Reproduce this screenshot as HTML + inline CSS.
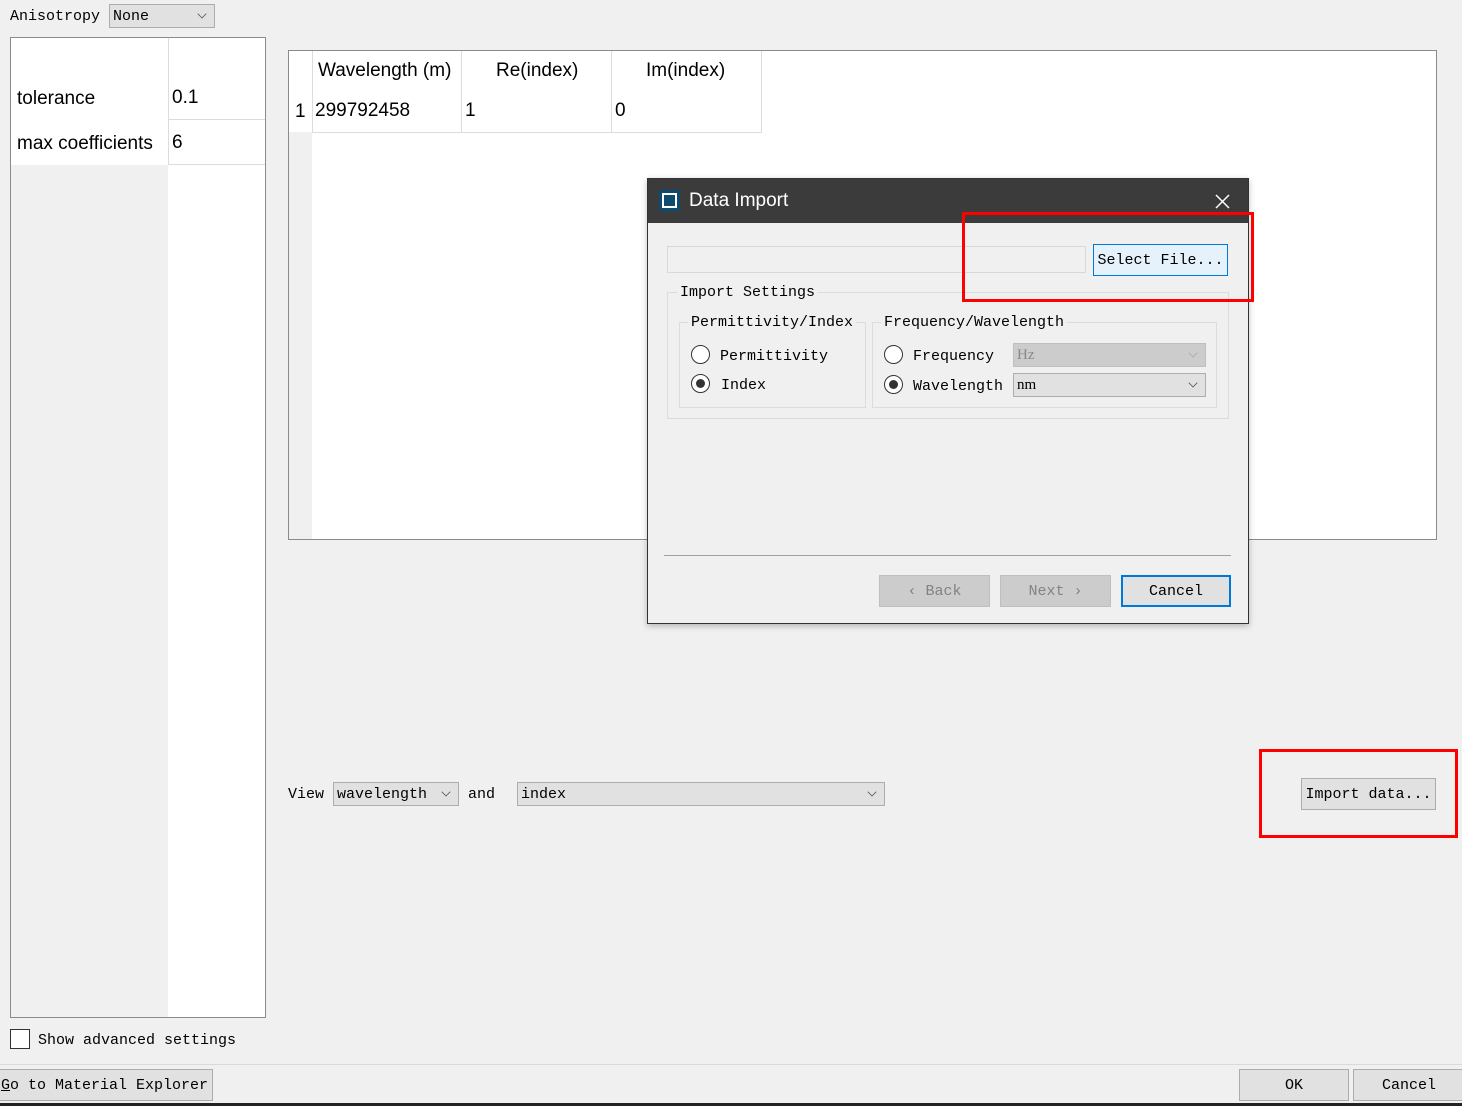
<!DOCTYPE html>
<html><head><meta charset="utf-8">
<style>
*{box-sizing:border-box;margin:0;padding:0}
body{width:1462px;height:1106px;background:#f0f0f0;position:relative;overflow:hidden;font-family:"Liberation Mono","Noto Serif CJK SC",monospace;font-size:15px;color:#000;line-height:21px}
.a{position:absolute}
.sans{font-family:"Liberation Sans","Noto Sans CJK SC",sans-serif;font-size:19px;line-height:26px}
.combo{position:absolute;background:#e1e1e1;border:1px solid #adadad;padding-left:3px;line-height:20px}
.chev{position:absolute;right:8px;width:8px;height:8px;border-right:1px solid #555;border-bottom:1px solid #555;transform:rotate(45deg) scale(.8);top:5px}
.btn{position:absolute;background:#e1e1e1;border:1px solid #adadad;text-align:center}
.radio{position:absolute;width:19px;height:19px;border:1px solid #333;border-radius:50%;background:#fff}
.radio.on::after{content:"";position:absolute;left:4px;top:4px;width:9px;height:9px;border-radius:50%;background:#333}
.grp{position:absolute;border:1px solid #dcdcdc}
.lbl{position:absolute;background:#f0f0f0;padding:0 3px;line-height:20px}
</style></head><body>
<div class="a" style="left:10px;top:6px">Anisotropy</div>
<div class="combo" style="left:109px;top:4px;width:106px;height:24px;line-height:24px">None<span class="chev"></span></div>

<div class="a" style="left:10px;top:37px;width:256px;height:981px;border:1px solid #8a8a95;background:#fff">
  <div class="a" style="left:0;top:127px;width:157px;height:852px;background:#f0f0f0"></div>
  <div class="a" style="left:157px;top:0;width:1px;height:127px;background:#dcdcdc"></div>
  <div class="a" style="left:157px;top:81px;width:97px;height:1px;background:#dcdcdc"></div>
  <div class="a" style="left:157px;top:126px;width:97px;height:1px;background:#dcdcdc"></div>
  <div class="a sans" style="left:6px;top:48px">tolerance</div>
  <div class="a sans" style="left:161px;top:47px">0.1</div>
  <div class="a sans" style="left:6px;top:93px">max coefficients</div>
  <div class="a sans" style="left:161px;top:92px">6</div>
</div>

<div class="a" style="left:288px;top:50px;width:1149px;height:490px;border:1px solid #8a8a8a;background:#fff">
  <div class="a" style="left:0;top:81px;width:23px;height:407px;background:#f0f0f0"></div>
  <div class="a" style="left:23px;top:81px;width:450px;height:1px;background:#dcdcdc"></div>
  <div class="a" style="left:23px;top:0;width:1px;height:81px;background:#dcdcdc"></div>
  <div class="a" style="left:172px;top:0;width:1px;height:81px;background:#dcdcdc"></div>
  <div class="a" style="left:322px;top:0;width:1px;height:81px;background:#dcdcdc"></div>
  <div class="a" style="left:472px;top:0;width:1px;height:81px;background:#dcdcdc"></div>
  <div class="a sans" style="left:29px;top:7px">Wavelength (m)</div>
  <div class="a sans" style="left:207px;top:7px">Re(index)</div>
  <div class="a sans" style="left:357px;top:7px">Im(index)</div>
  <div class="a sans" style="left:6px;top:48px">1</div>
  <div class="a sans" style="left:26px;top:47px">299792458</div>
  <div class="a sans" style="left:176px;top:47px">1</div>
  <div class="a sans" style="left:326px;top:47px">0</div>
</div>

<div class="a" style="left:288px;top:784px">View</div>
<div class="combo" style="left:333px;top:782px;width:126px;height:24px;line-height:24px">wavelength<span class="chev"></span></div>
<div class="a" style="left:468px;top:784px">and</div>
<div class="combo" style="left:517px;top:782px;width:368px;height:24px;line-height:24px">index<span class="chev"></span></div>

<div class="btn" style="left:1301px;top:778px;width:135px;height:32px;line-height:32px">Import data...</div>
<div class="a" style="left:1259px;top:749px;width:199px;height:89px;border:3px solid #f00"></div>

<div class="a" style="left:10px;top:1029px;width:20px;height:20px;border:1px solid #333;background:#fff"></div>
<div class="a" style="left:38px;top:1030px">Show advanced settings</div>
<div class="a" style="left:0;top:1064px;width:1462px;height:1px;background:#dadada"></div>
<div class="btn" style="left:-1px;top:1069px;width:214px;height:32px;line-height:32px;text-align:left;padding-left:1px"><u>G</u>o to Material Explorer</div>
<div class="btn" style="left:1239px;top:1069px;width:110px;height:32px;line-height:32px">OK</div>
<div class="btn" style="left:1353px;top:1069px;width:112px;height:32px;line-height:32px">Cancel</div>
<div class="a" style="left:0;top:1103px;width:1462px;height:3px;background:#222"></div>

<div class="a" style="left:647px;top:178px;width:602px;height:446px;background:#f0f0f0;border:1px solid #333;box-shadow:0 2px 6px rgba(0,0,0,.25)">
  <div class="a" style="left:0;top:0;width:600px;height:44px;background:#3b3b3b"></div>
  <div class="a" style="left:11px;top:11px;width:21px;height:21px;background:#0e4a6e"></div>
  <div class="a" style="left:14px;top:14px;width:15px;height:15px;border:2px solid #fff"></div>
  <div class="a" style="left:41px;top:9px;color:#fff;font-family:'Liberation Sans',sans-serif;font-size:19px;line-height:26px">Data Import</div>
  <svg class="a" style="left:567px;top:15px" width="15" height="15"><path d="M1 1L14 14M14 1L1 14" stroke="#fff" stroke-width="1.5"/></svg>

  <div class="a" style="left:19px;top:67px;width:419px;height:27px;border:1px solid #d8d8d8;background:#f0f0f0"></div>
  <div class="btn" style="left:445px;top:65px;width:135px;height:32px;line-height:32px;background:#e5f1fb;border-color:#0078d7">Select File...</div>

  <div class="grp" style="left:19px;top:113px;width:562px;height:127px"></div>
  <div class="lbl" style="left:29px;top:104px">Import Settings</div>
  <div class="grp" style="left:31px;top:143px;width:187px;height:86px"></div>
  <div class="lbl" style="left:40px;top:134px">Permittivity/Index</div>
  <div class="grp" style="left:224px;top:143px;width:345px;height:86px"></div>
  <div class="lbl" style="left:233px;top:134px">Frequency/Wavelength</div>

  <div class="radio" style="left:43px;top:166px"></div>
  <div class="a" style="left:72px;top:167px">Permittivity</div>
  <div class="radio on" style="left:43px;top:195px"></div>
  <div class="a" style="left:73px;top:196px">Index</div>

  <div class="radio" style="left:236px;top:166px"></div>
  <div class="a" style="left:265px;top:167px">Frequency</div>
  <div class="radio on" style="left:236px;top:196px"></div>
  <div class="a" style="left:265px;top:197px">Wavelength</div>
  <div class="combo" style="left:365px;top:164px;width:193px;height:24px;line-height:22px;background:#cccccc;border-color:#bfbfbf;color:#888;font-family:'Liberation Serif',serif">Hz<span class="chev" style="border-color:#aaa"></span></div>
  <div class="combo" style="left:365px;top:194px;width:193px;height:24px;line-height:22px;font-family:'Liberation Serif',serif">nm<span class="chev"></span></div>

  <div class="a" style="left:16px;top:376px;width:567px;height:1px;background:#a0a0a0"></div>
  <div class="btn" style="left:231px;top:396px;width:111px;height:32px;line-height:32px;background:#cccccc;border-color:#bfbfbf;color:#838383">&lsaquo; Back</div>
  <div class="btn" style="left:352px;top:396px;width:111px;height:32px;line-height:32px;background:#cccccc;border-color:#bfbfbf;color:#838383">Next &rsaquo;</div>
  <div class="btn" style="left:473px;top:396px;width:110px;height:32px;line-height:30px;border:2px solid #0078d7">Cancel</div>
</div>
<div class="a" style="left:962px;top:212px;width:292px;height:90px;border:3px solid #f00"></div>
</body></html>
